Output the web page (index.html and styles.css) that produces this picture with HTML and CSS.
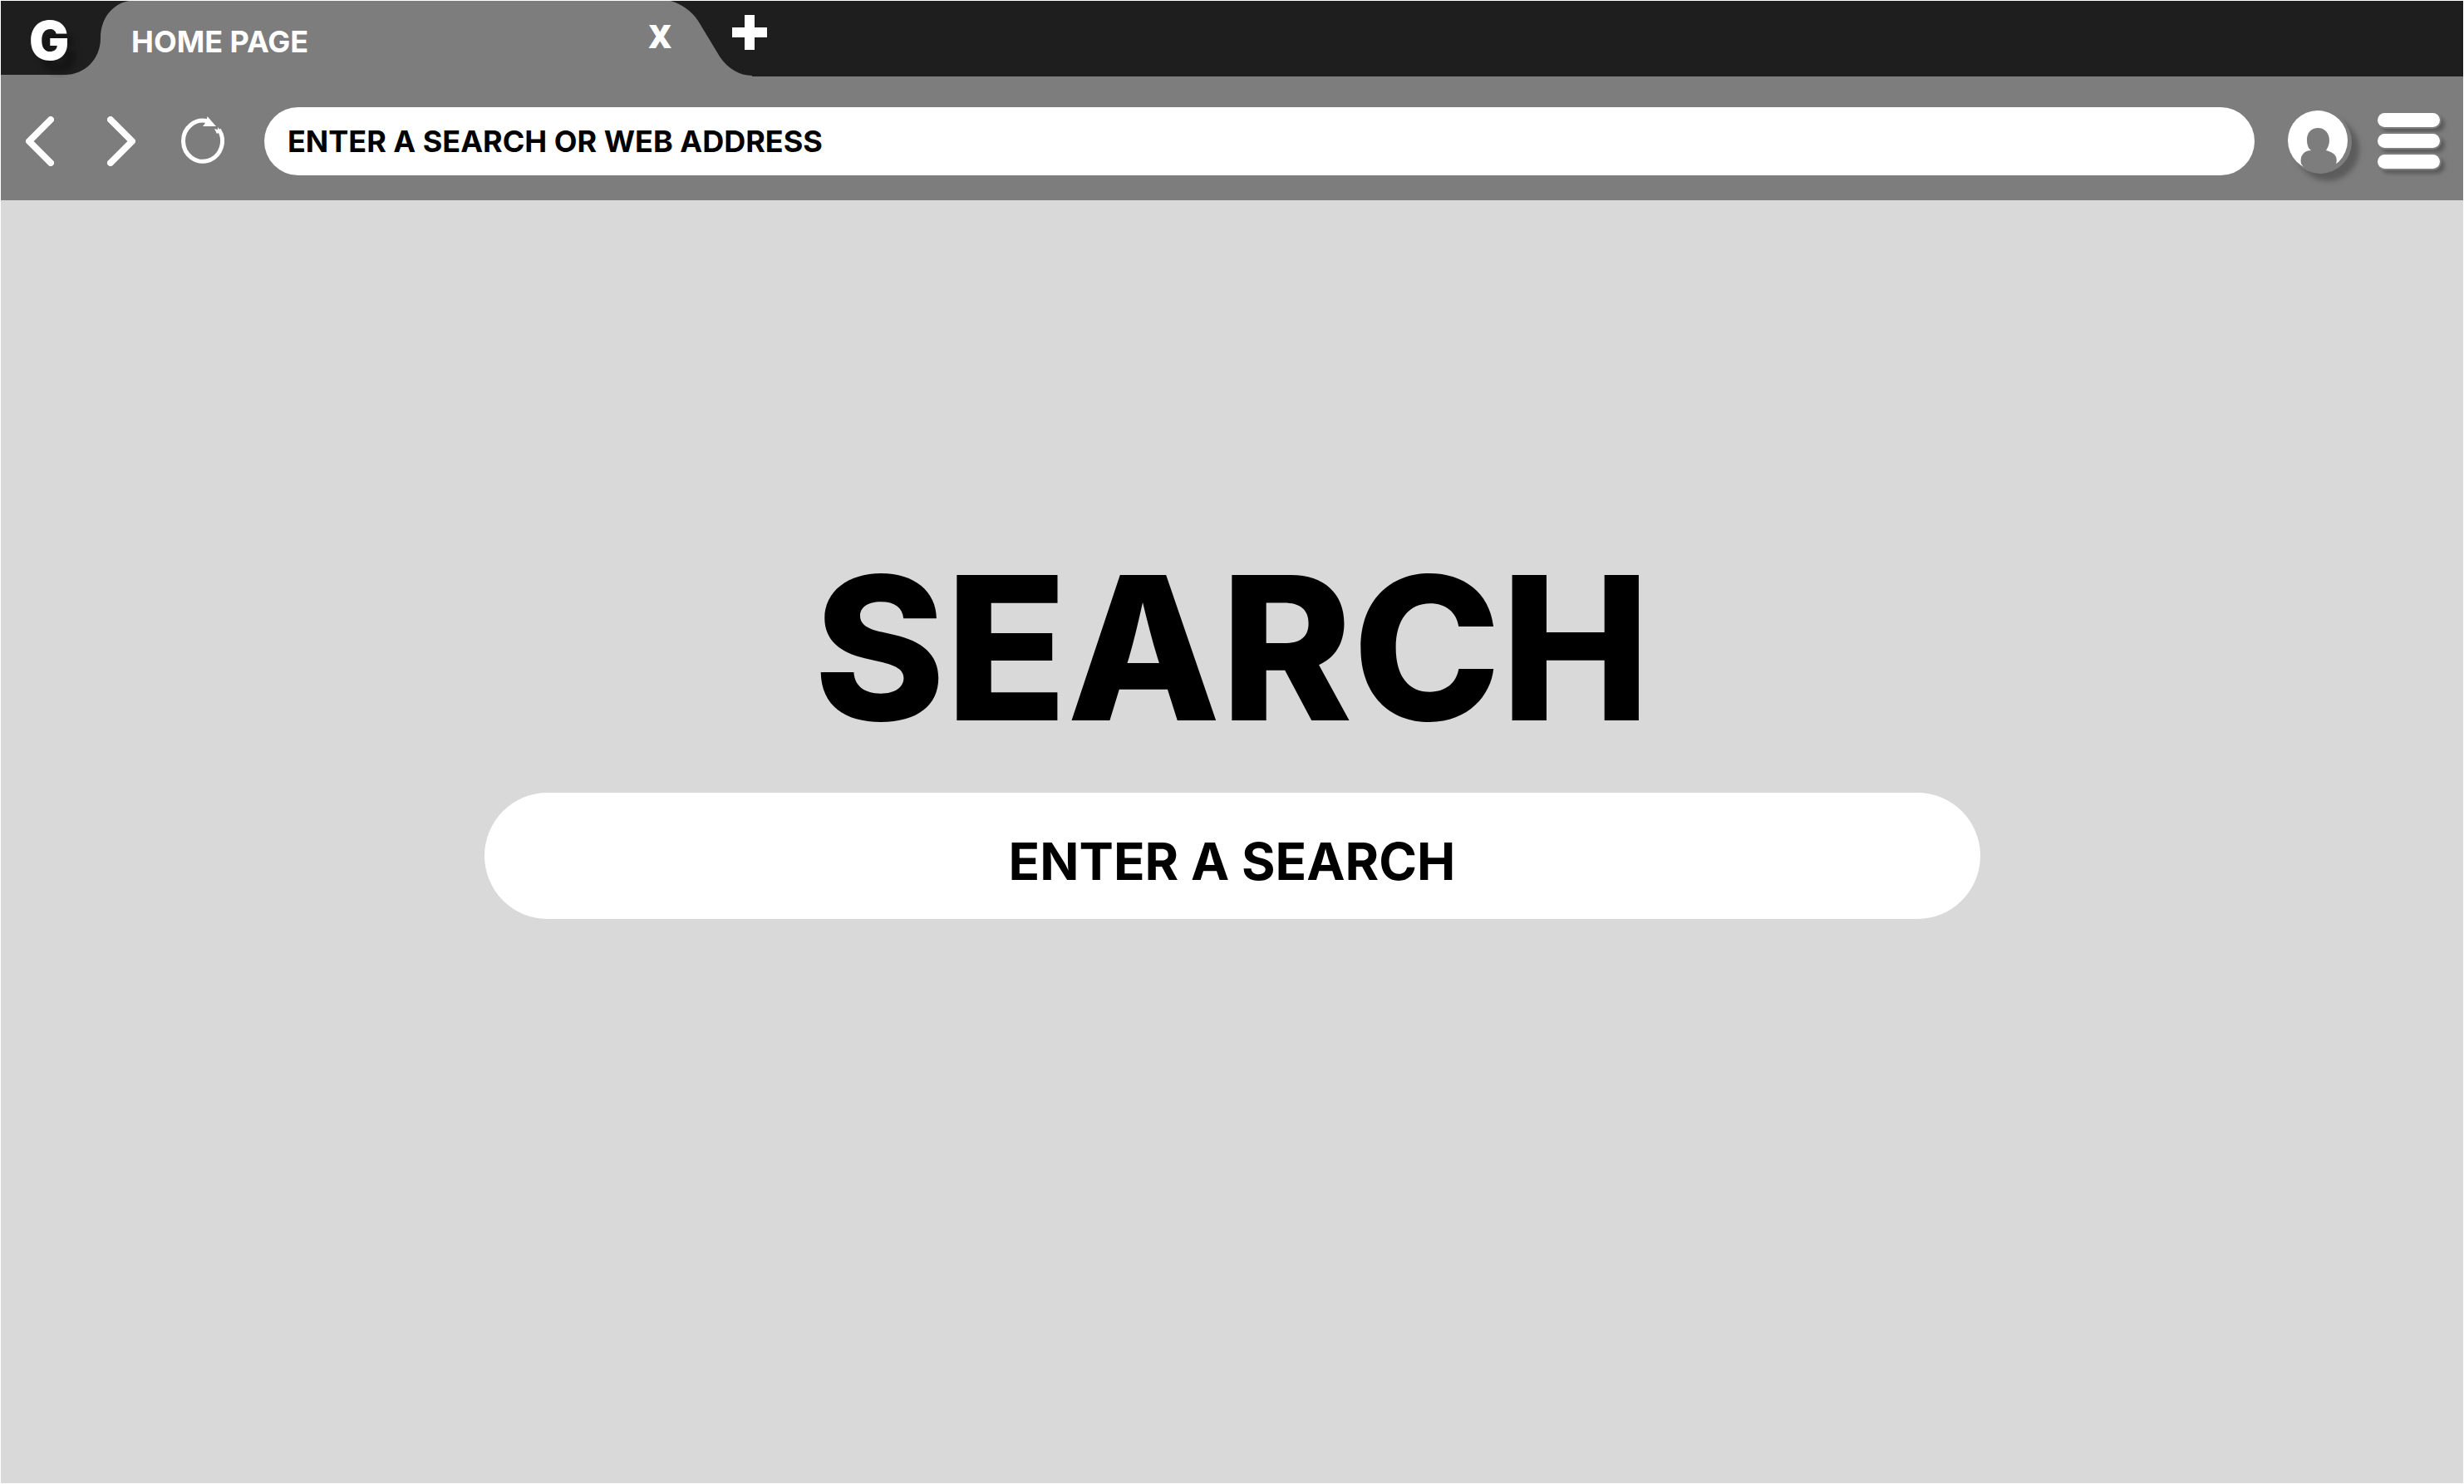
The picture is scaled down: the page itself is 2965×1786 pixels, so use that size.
FILE: index.html
```html
<!DOCTYPE html>
<html lang="en">
<head>
<meta charset="utf-8">
<title>Home Page</title>
<link rel="stylesheet" href="styles.css">
</head>
<body>
<header class="browser">
  <div class="tabs">
    <a class="brand" href="#">G</a>
    <div class="tab">
      <svg class="tab-shape" viewBox="0 0 827 91" preserveAspectRatio="none" aria-hidden="true"><path d="M0 91V89C24 89 43 70 43 45C43 21 57 4 77 0H729C743 4 755 13 762 24L788 67C797 81 812 90 827 90V91Z"/></svg>
      <span class="tab-title">HOME PAGE</span>
      <button class="close" type="button" aria-label="Close tab">X</button>
    </div>
    <button class="new-tab" type="button" aria-label="New tab">
      <svg width="42" height="42" viewBox="0 0 42 42"><path d="M15 0H27V15H42V27H27V42H15V27H0V15H15Z" fill="#fff"/></svg>
    </button>
  </div>
  <div class="toolbar">
    <nav class="history">
      <button type="button" aria-label="Back"><svg width="34" height="60" viewBox="0 0 34 60"><path d="M30 4L4 30L30 56"/></svg></button>
      <button type="button" aria-label="Forward"><svg width="34" height="60" viewBox="0 0 34 60"><path d="M4 4L30 30L4 56"/></svg></button>
      <button type="button" aria-label="Reload"><svg width="52" height="60" viewBox="0 0 52 60"><path class="ring" d="M32 6A23.500 24.500 0 1 0 45.500 16"/><path class="tip" d="M31.500 0L42 12L26 12C29 9 31 5 31.500 0ZM40 15L44 16V13L48 18L43 21Z"/></svg></button>
    </nav>
    <input class="address" type="text" aria-label="Web address" placeholder="ENTER A SEARCH OR WEB ADDRESS">
    <div class="actions">
      <button type="button" aria-label="Profile">
        <svg class="profile" width="78" height="78" viewBox="0 -2 78 78"><circle cx="39" cy="38" r="38" fill="#7d7d7d"/><circle cx="36" cy="36" r="36" fill="#fff"/><path d="M16 64C14 54 20 48 28 48C24 45 23 40 23 35C23 27 28 21 36.500 21C45 21 50 28 50 36C50 41 48 45 46 48C54 50 60 54 58.500 62L58 66C54 72 46 74 38 74C29 74 21 72 16 64Z" fill="#7d7d7d"/></svg>
      </button>
      <button class="menu" type="button" aria-label="Menu"><span></span><span></span><span></span></button>
    </div>
  </div>
</header>
<main class="home">
  <h1>SEARCH</h1>
  <input class="search" type="text" aria-label="Search" placeholder="ENTER A SEARCH">
</main>
</body>
</html>
```
FILE: styles.css
```css
* { box-sizing: border-box; }
body {
  margin: 0;
  min-height: 100vh;
  display: flex;
  flex-direction: column;
  border: 1px solid #fff;
  background: #d9d9d9;
  font-family: Inter, "Liberation Sans", sans-serif;
  font-weight: 700;
}
button {
  display: block;
  padding: 0;
  border: 0;
  background: none;
  color: #fff;
  font: inherit;
  cursor: pointer;
}
svg { display: block; }
input { border: 0; outline: 0; background: #fff; color: #000; font: inherit; }
input::placeholder { color: #000; opacity: 1; }

.tabs { display: flex; height: 91px; background: #1e1e1e; }
.brand {
  width: 77px;
  padding: 8px 0 0 34px;
  color: #fff;
  font-size: 64px;
  font-weight: 900;
  line-height: 80px;
  text-decoration: none;
  text-shadow: 10px 14px 6px #161616;
  white-space: nowrap;
  position: relative;
  z-index: 1;
  background: linear-gradient(#7d7d7d, #7d7d7d) left bottom / 100% 2px no-repeat;
}
.tab {
  position: relative;
  display: flex;
  justify-content: space-between;
  width: 827px;
  padding: 0 97px 0 80px;
  color: #fff;
}
.tab-shape { position: absolute; inset: 0; width: 100%; height: 100%; fill: #7d7d7d; }
.tab-title, .close { position: relative; }
.tab-title { font-size: 36px; line-height: 98px; }
.close { height: 84px; font: 900 38px/84px "Noto Sans", sans-serif; }
.new-tab { height: 76px; margin-left: -24px; position: relative; }

.toolbar {
  display: flex;
  align-items: center;
  height: 149px;
  padding: 6px 28px 0 30px;
  background: #7d7d7d;
}
.history { display: flex; align-items: center; gap: 60px; }
.history button:nth-child(2) { margin: 0 -5px 0 4px; }
.history path { fill: none; stroke: #fff; stroke-width: 8; stroke-linecap: round; stroke-linejoin: round; }
.history .ring { stroke-width: 5; stroke-linecap: butt; }
.history .tip { fill: #fff; stroke: none; }
.address {
  flex: 1;
  min-width: 0;
  height: 82px;
  margin: 0 40px 0 48px;
  padding: 0 28px;
  border-radius: 41px;
  font-size: 36px;
}
.actions { display: flex; align-items: center; gap: 30px; }
.profile { overflow: visible; filter: drop-shadow(9px 9px 3px #5c5c5c); }
.menu { display: flex; flex-direction: column; gap: 8px; }
.menu span {
  width: 75px;
  height: 17px;
  border-radius: 9px;
  background: #fff;
  box-shadow: 0 0 0 2px #7d7d7d, 5px 5px 4px 1px #5c5c5c;
}

.home {
  flex: 1;
  display: flex;
  flex-direction: column;
  align-items: center;
  justify-content: center;
  gap: 54px;
  padding: 0 40px 260px;
}
h1 { margin: 0; font-size: 240px; font-weight: 800; line-height: 240px; }
.search {
  width: 1800px;
  max-width: 100%;
  height: 152px;
  padding: 12px 76px 0;
  border-radius: 76px;
  font-size: 62px;
  text-align: center;
}
```
